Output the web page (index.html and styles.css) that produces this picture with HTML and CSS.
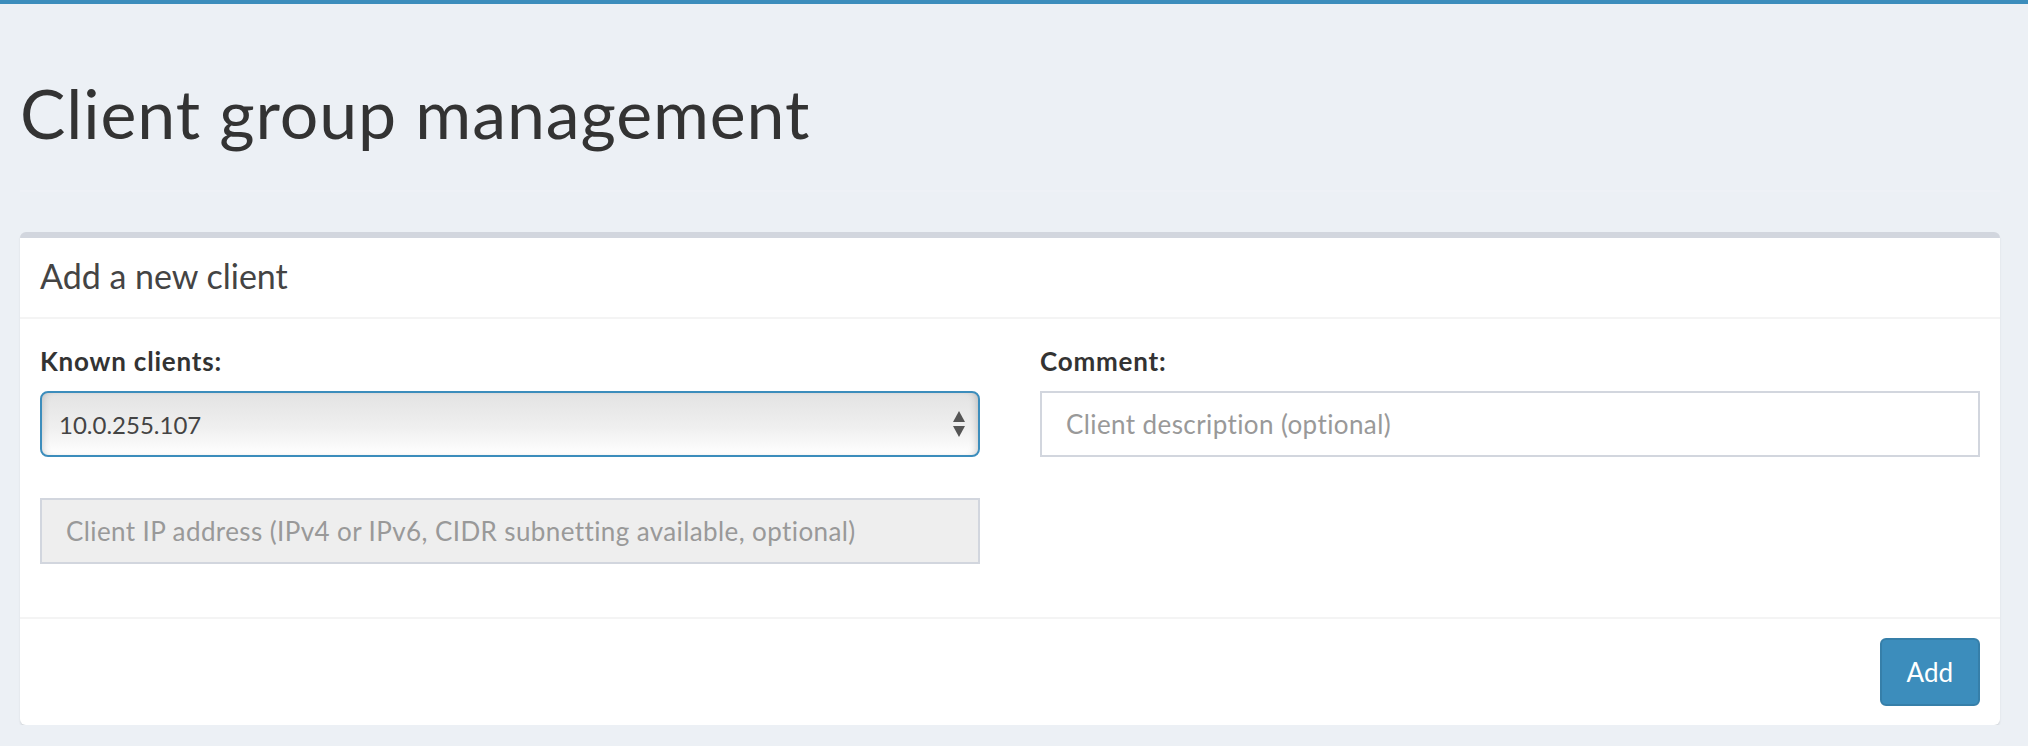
FILE: index.html
```html
<!DOCTYPE html>
<html lang="en">
<head>
  <meta charset="UTF-8" />
  <meta name="viewport" content="width=device-width, initial-scale=1.0"/>
  <title>Client group management</title>
  <link rel="stylesheet" href="styles.css">
</head>
<body>

  <div class="topbar"></div>

  <div class="page-header">
    <h1>Client group management</h1>
  </div>

  <div class="box">
    <div class="box-header">
      <h3 class="box-title">Add a new client</h3>
    </div>

    <div class="box-body">
      <div class="row">
        <div class="col">
          <label for="select">Known clients:</label>
          <div class="select" id="select">
            <span>10.0.255.107</span>
            <svg class="arrows" width="14" height="26" viewBox="0 0 14 26">
              <path d="M7 0 L13 11 L1 11 Z" fill="#555"/>
              <path d="M1 15 L13 15 L7 26 Z" fill="#555"/>
            </svg>
          </div>
          <input type="text" class="form-control ip" placeholder="Client IP address (IPv4 or IPv6, CIDR subnetting available, optional)" disabled>
        </div>
        <div class="col">
          <label for="comment">Comment:</label>
          <input type="text" id="comment" class="form-control" placeholder="Client description (optional)">
        </div>
      </div>
    </div>

    <div class="box-footer">
      <button>Add</button>
    </div>
  </div>

</body>
</html>
```

FILE: styles.css
```css
* {
  box-sizing: border-box;
}

body {
  margin: 0;
  background: #ecf0f5;
  font-family: Lato, "Open Sans", sans-serif;
  color: #333;
  overflow: hidden;
}

.topbar {
  height: 4px;
  background: #3c8dbc;
}

.page-header {
  margin: 0 28px 0 20px;
  padding: 75px 0 44px;
  border-bottom: 2px solid #eef1f6;
}

h1 {
  margin: 0;
  font-size: 68px;
  line-height: 67px;
  font-weight: 400;
  letter-spacing: 0.9px;
  color: #333;
}

.box {
  margin: 40px 28px 0 20px;
  background: #fff;
  border-top: 6px solid #d2d6de;
  border-radius: 6px;
  box-shadow: 0 2px 2px rgba(0, 0, 0, 0.1);
}

.box-header {
  padding: 21px 20px 25px;
  border-bottom: 2px solid #f4f4f4;
}

.box-title {
  margin: 0;
  font-size: 34px;
  line-height: 33px;
  font-weight: 400;
  color: #444;
}

.box-body {
  padding: 24px 20px 53px;
}

.row {
  display: grid;
  grid-template-columns: 1fr 1fr;
  column-gap: 60px;
}

label {
  display: block;
  font-size: 26px;
  line-height: 36px;
  font-weight: 700;
  letter-spacing: 0.8px;
  margin-bottom: 12px;
}

.select {
  display: flex;
  align-items: center;
  justify-content: space-between;
  height: 66px;
  padding: 0 12px 0 17px;
  border: 2px solid #3c8dbc;
  border-radius: 8px;
  background: linear-gradient(#e3e3e3, #efefef 55%, #fff);
  box-shadow: inset -6px 0 8px -6px rgba(0, 0, 0, 0.25), inset 6px 0 8px -6px rgba(0, 0, 0, 0.2);
  font-size: 24px;
  color: #444;
}

.form-control {
  display: block;
  width: 100%;
  height: 66px;
  padding: 0 24px;
  border: 2px solid #d2d6de;
  border-radius: 0;
  background: #fff;
  font-family: Lato, "Open Sans", sans-serif;
  font-size: 26px;
  letter-spacing: 0.4px;
  color: #555;
  outline: none;
}

.form-control::placeholder {
  color: #999;
}

.ip {
  margin-top: 41px;
  background: #eee;
}

.box-footer {
  display: flex;
  justify-content: flex-end;
  padding: 19px 20px;
  border-top: 2px solid #f4f4f4;
}

button {
  height: 68px;
  padding: 0 25px;
  background: #3c8dbc;
  border: 2px solid #367fa9;
  border-radius: 6px;
  color: #fff;
  font-family: Lato, "Open Sans", sans-serif;
  font-size: 26px;
  cursor: pointer;
}
```
